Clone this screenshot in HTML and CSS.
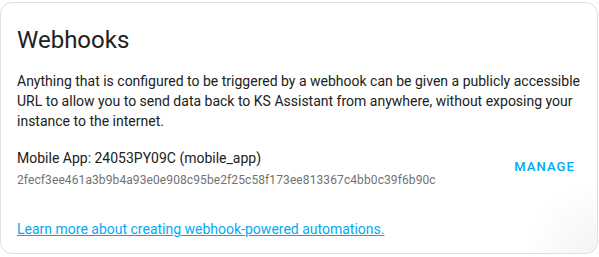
FILE: index.html
```html
<!DOCTYPE html>
<html>
<head>
<meta charset="utf-8">
<link rel="stylesheet" href="styles.css">
</head>
<body>
<div class="card">
  <h1 class="card-title">Webhooks</h1>
  <div class="card-content">
    <p class="intro">Anything that is configured to be triggered by a webhook can be given a publicly accessible URL to allow you to send data back to KS Assistant from anywhere, without exposing your instance to the internet.</p>
    <div class="item">
      <div class="item-text">
        <div class="item-name">Mobile App: 24053PY09C (mobile_app)</div>
        <div class="item-id">2fecf3ee461a3b9b4a93e0e908c95be2f25c58f173ee813367c4bb0c39f6b90c</div>
      </div>
      <button class="manage">MANAGE</button>
    </div>
    <a class="learn" href="#">Learn more about creating webhook-powered automations.</a>
  </div>
</div>
</body>
</html>
```
FILE: styles.css
```css
html, body {
  margin: 0;
  padding: 0;
  background: #ffffff;
}
body {
  font-family: Roboto, "Noto Sans", sans-serif;
  padding-top: 2px;
}
.card {
  box-sizing: border-box;
  width: 598px;
  height: 252px;
  border: 1px solid #e0e0e0;
  border-radius: 12px;
  background: radial-gradient(circle at 100% 100%, #f3f3f3 0, #ffffff 70px);
  color: #212121;
}
.card-title {
  margin: 0;
  padding: 21px 16px 0 16px;
  font-size: 24px;
  font-weight: 400;
  line-height: 32px;
  color: #212121;
}
.card-content {
  padding: 15px 16px 16px 16px;
}
.intro {
  margin: 0;
  font-size: 14px;
  line-height: 20px;
  color: #212121;
}
.item {
  display: flex;
  align-items: flex-start;
  margin-top: 17px;
  height: 46px;
}
.item-text {
  flex: 1;
}
.item-name {
  font-size: 14px;
  line-height: 20px;
  color: #212121;
}
.item-id {
  margin-top: 2px;
  font-size: 12px;
  line-height: 20px;
  color: #727272;
  letter-spacing: 0.1px;
}
.manage {
  background: none;
  border: none;
  padding: 0;
  margin: 11px 6px 0 0;
  font-family: Roboto, sans-serif;
  font-size: 13px;
  line-height: 16px;
  font-weight: 500;
  letter-spacing: 1.1px;
  color: #03a9f4;
}
.learn {
  display: inline-block;
  margin-top: 25px;
  font-size: 14px;
  line-height: 20px;
  color: #03a9f4;
  text-decoration: underline;
}
```
